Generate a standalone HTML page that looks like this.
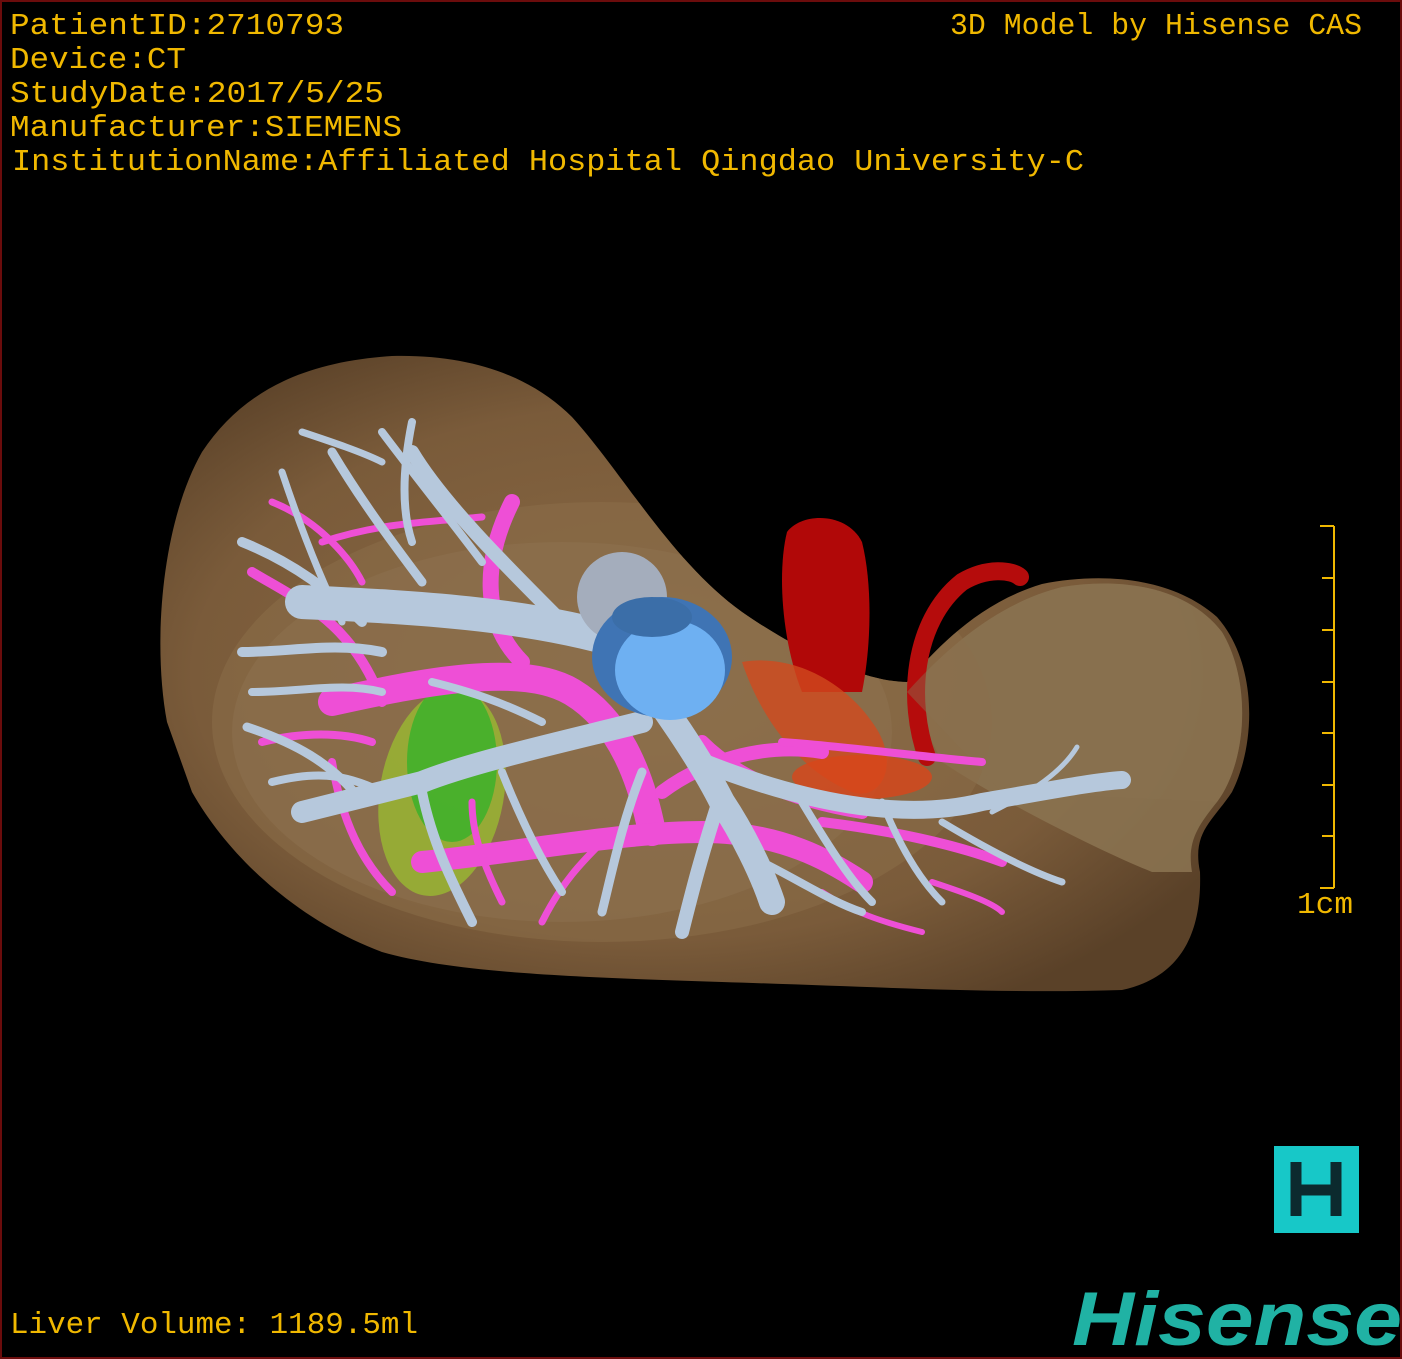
<!DOCTYPE html>
<html><head><meta charset="utf-8"><style>
html,body{margin:0;padding:0;background:#000;}
.wrap{position:relative;width:1402px;height:1359px;background:#000;overflow:hidden;box-sizing:border-box;border:2px solid #6b0c0c;}
svg{position:absolute;left:0;top:0;}
</style></head><body><div class="wrap">
<svg width="1402" height="1359" viewBox="0 0 1402 1359">
<defs>
<radialGradient id="lv" cx="0.45" cy="0.5" r="0.6">
<stop offset="0" stop-color="#8a6a45"/><stop offset="0.7" stop-color="#7a5b3a"/><stop offset="1" stop-color="#5a4128"/>
</radialGradient>
<clipPath id="lc"><path d="M165,720 C150,640 160,520 200,450 C240,390 300,360 390,354 C470,352 530,375 570,415 C620,470 670,560 740,610 C790,645 860,680 905,680 C940,640 980,600 1040,582 C1100,570 1170,575 1215,615 C1255,660 1255,740 1230,790 C1210,820 1190,830 1198,870 C1200,930 1180,975 1120,988 C1000,992 880,985 720,980 C560,975 450,970 380,950 C300,920 230,860 190,790 Z"/></clipPath>
</defs>
<!-- liver -->
<path d="M165,720 C150,640 160,520 200,450 C240,390 300,360 390,354 C470,352 530,375 570,415 C620,470 670,560 740,610 C790,645 860,680 905,680 C940,640 980,600 1040,582 C1100,570 1170,575 1215,615 C1255,660 1255,740 1230,790 C1210,820 1190,830 1198,870 C1200,930 1180,975 1120,988 C1000,992 880,985 720,980 C560,975 450,970 380,950 C300,920 230,860 190,790 Z" fill="url(#lv)"/>
<g clip-path="url(#lc)">
<path d="M905,690 C950,640 1000,600 1060,585 C1120,575 1185,585 1220,630 C1250,680 1245,760 1215,800 C1195,825 1185,840 1190,870 L1150,870 C1100,850 1000,800 940,760 Z" fill="#8a7250" opacity="0.9"/>
<ellipse cx="600" cy="720" rx="390" ry="220" fill="#8a6d48" opacity="0.55"/>
<ellipse cx="560" cy="730" rx="330" ry="190" fill="#8e7150" opacity="0.5"/>
</g>
<!-- gallbladder -->
<ellipse cx="440" cy="790" rx="62" ry="105" fill="#9bbf30" opacity="0.75" transform="rotate(10 440 790)"/>
<ellipse cx="450" cy="760" rx="45" ry="80" fill="#3cb22a" opacity="0.85"/>
<!-- red vessels -->
<path d="M785,530 C800,510 845,510 860,540 C870,580 870,640 860,690 L800,690 C780,640 775,570 785,530 Z" fill="#b10808"/>
<path d="M925,755 C905,700 910,620 960,580 C985,565 1010,568 1018,575" fill="none" stroke="#b50c0c" stroke-width="18" stroke-linecap="round"/>
<path d="M740,660 C800,650 850,690 870,720 C900,760 880,800 850,790 C800,770 760,720 740,660 Z" fill="#d14a1e" opacity="0.8"/>
<ellipse cx="860" cy="775" rx="70" ry="22" fill="#d8461a" opacity="0.8"/>
<path d="M905,690 C950,640 1000,600 1060,585 C1120,575 1185,585 1220,630 C1250,680 1245,760 1215,800 L1000,790 Z" fill="#8a7250" opacity="0.45"/>
<!-- pink vessels -->
<g fill="none" stroke="#ee4fd6" stroke-linecap="round">
<path d="M330,700 C420,680 520,660 570,690 C620,720 640,780 650,830" stroke-width="28"/>
<path d="M510,500 C480,560 480,620 520,660" stroke-width="16"/>
<path d="M420,860 C520,850 620,830 700,830 C780,830 830,860 860,880" stroke-width="22"/>
<path d="M660,790 C700,760 760,740 820,750" stroke-width="14"/>
<path d="M700,740 C740,780 800,800 860,810" stroke-width="14"/>
<path d="M780,740 C850,745 920,755 980,760" stroke-width="8"/>
<path d="M820,820 C900,830 960,845 1000,860" stroke-width="10"/>
<path d="M250,570 C300,600 350,620 380,700" stroke-width="10"/>
<path d="M260,740 C300,730 340,730 370,740" stroke-width="8"/>
<path d="M270,500 C320,520 350,560 360,580" stroke-width="7"/>
<path d="M320,540 C380,520 430,520 480,515" stroke-width="7"/>
<path d="M330,760 C340,820 360,860 390,890" stroke-width="8"/>
<path d="M500,900 C480,860 470,830 470,800" stroke-width="7"/>
<path d="M540,920 C560,880 580,860 600,840" stroke-width="7"/>
<path d="M820,890 C850,910 880,920 920,930" stroke-width="6"/>
<path d="M930,880 C960,890 990,900 1000,910" stroke-width="6"/>
</g>
<!-- portal / light blue vessels -->
<g fill="none" stroke="#b6c8dc" stroke-linecap="round">
<path d="M300,600 C400,605 520,610 620,640" stroke-width="34"/>
<path d="M620,650 C660,700 700,760 720,800 C740,830 760,870 770,900" stroke-width="26"/>
<path d="M700,760 C800,800 900,820 980,800 C1040,790 1090,780 1120,778" stroke-width="18"/>
<path d="M640,720 C560,740 470,760 420,780 C380,790 340,800 300,810" stroke-width="22"/>
<path d="M720,790 C700,850 690,890 680,930" stroke-width="14"/>
<path d="M560,620 C500,560 440,500 410,450" stroke-width="14"/>
<path d="M480,560 C450,520 410,470 380,430" stroke-width="8"/>
<path d="M410,420 C400,470 400,510 410,540" stroke-width="8"/>
<path d="M330,450 C360,500 390,540 420,580" stroke-width="9"/>
<path d="M240,540 C290,560 330,590 360,620" stroke-width="10"/>
<path d="M280,470 C300,530 320,580 340,620" stroke-width="7"/>
<path d="M240,650 C290,650 330,640 380,650" stroke-width="10"/>
<path d="M250,690 C300,690 340,680 380,690" stroke-width="8"/>
<path d="M245,725 C290,740 330,760 360,800" stroke-width="9"/>
<path d="M270,780 C310,770 340,770 380,790" stroke-width="8"/>
<path d="M420,790 C430,840 450,880 470,920" stroke-width="10"/>
<path d="M500,770 C520,820 540,860 560,890" stroke-width="8"/>
<path d="M640,770 C620,820 610,870 600,910" stroke-width="9"/>
<path d="M760,860 C800,880 830,900 860,910" stroke-width="8"/>
<path d="M800,800 C830,850 850,880 870,900" stroke-width="8"/>
<path d="M880,800 C900,850 920,880 940,900" stroke-width="7"/>
<path d="M940,820 C990,850 1030,870 1060,880" stroke-width="7"/>
<path d="M990,810 C1030,790 1060,770 1075,745" stroke-width="5"/>
<path d="M540,720 C500,700 470,690 430,680" stroke-width="8"/>
<path d="M300,430 C330,440 360,450 380,460" stroke-width="7"/>
</g>
<!-- hepatic blue cluster -->
<ellipse cx="620" cy="595" rx="45" ry="45" fill="#a4adbc"/>
<ellipse cx="660" cy="655" rx="70" ry="60" fill="#3f74b4"/>
<ellipse cx="668" cy="668" rx="55" ry="50" fill="#6eb0f2"/>
<ellipse cx="650" cy="615" rx="40" ry="20" fill="#3b6ea8"/>
<!-- texts -->
<g font-family="'Liberation Mono', monospace" font-size="31" fill="#f0b800">
<text x="8" y="32" textLength="334" lengthAdjust="spacingAndGlyphs">PatientID:2710793</text>
<text x="8" y="66" textLength="176" lengthAdjust="spacingAndGlyphs">Device:CT</text>
<text x="8" y="100" textLength="374" lengthAdjust="spacingAndGlyphs">StudyDate:2017/5/25</text>
<text x="8" y="134" textLength="392" lengthAdjust="spacingAndGlyphs">Manufacturer:SIEMENS</text>
<text x="10" y="168" textLength="1072" lengthAdjust="spacingAndGlyphs">InstitutionName:Affiliated Hospital Qingdao University-C</text>
<text x="948" y="32" textLength="412" lengthAdjust="spacingAndGlyphs">3D Model by Hisense CAS</text>
<text x="8" y="1331" textLength="408" lengthAdjust="spacingAndGlyphs">Liver Volume: 1189.5ml</text>
<text x="1295" y="911" textLength="56" lengthAdjust="spacingAndGlyphs">1cm</text>
</g>
<!-- scale bar -->
<g stroke="#f0b800" stroke-width="2">
<line x1="1332" y1="524" x2="1332" y2="886"/>
<line x1="1318" y1="524" x2="1332" y2="524"/>
<line x1="1320" y1="576" x2="1332" y2="576"/>
<line x1="1320" y1="628" x2="1332" y2="628"/>
<line x1="1320" y1="680" x2="1332" y2="680"/>
<line x1="1320" y1="731" x2="1332" y2="731"/>
<line x1="1320" y1="783" x2="1332" y2="783"/>
<line x1="1320" y1="834" x2="1332" y2="834"/>
<line x1="1318" y1="886" x2="1332" y2="886"/>
</g>
<!-- H logo -->
<rect x="1272" y="1144" width="85" height="87" fill="#17c8c8"/>
<path d="M1294,1160 v54 M1334,1160 v54 M1294,1188 h40" stroke="#0c2a2e" stroke-width="11" fill="none"/>
<text x="1070" y="1343" font-family="'Liberation Sans', sans-serif" font-weight="bold" font-style="italic" font-size="76" fill="#20b2a4" textLength="330" lengthAdjust="spacingAndGlyphs">Hisense</text>
</svg>
</div></body></html>
